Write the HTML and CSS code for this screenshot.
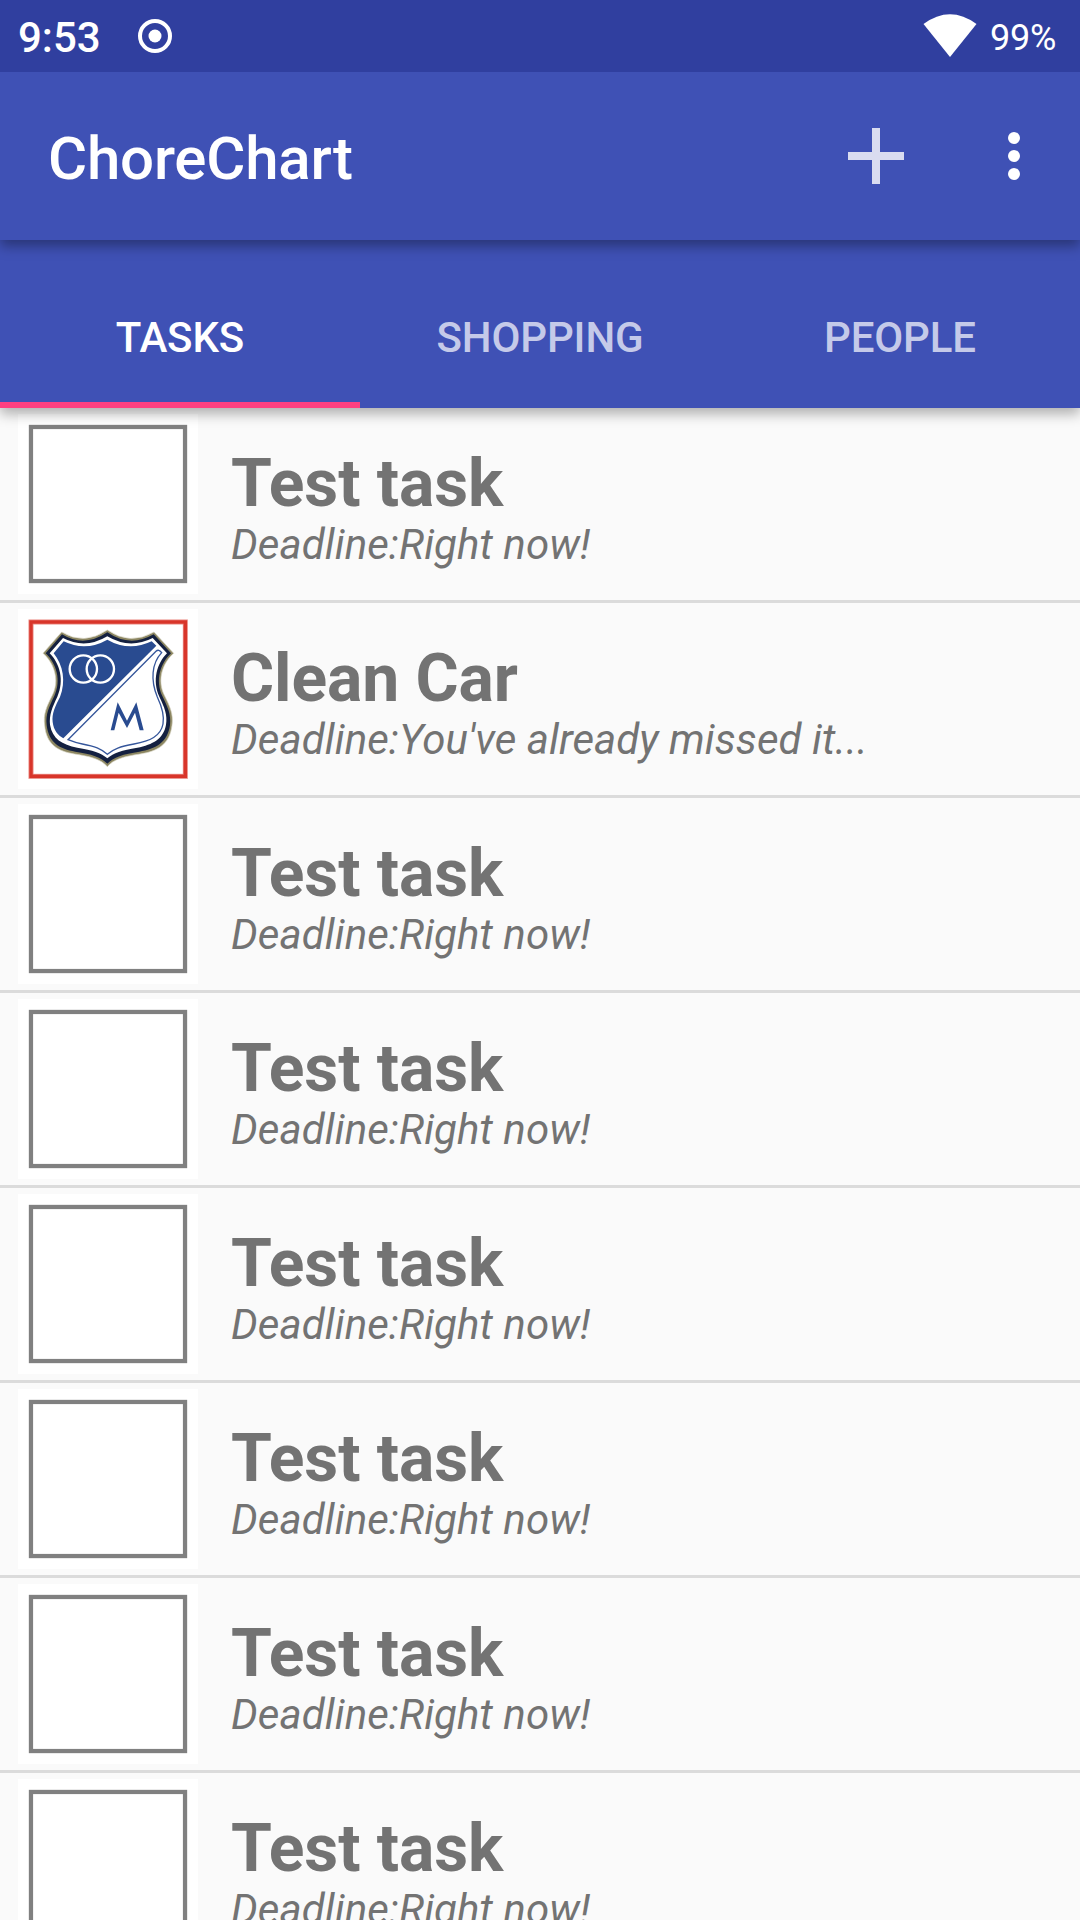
FILE: index.html
```html
<!DOCTYPE html>
<html lang="en">
<head>
<meta charset="utf-8">
<title>ChoreChart</title>
<link rel="stylesheet" href="styles.css">
</head>
<body>
<div class="screen">
  <div class="status-bar">
    <span class="clock">9:53</span>
    <svg class="record-icon" viewBox="0 0 36 36"><circle cx="18" cy="18" r="15" fill="none" stroke="#fff" stroke-width="4"/><circle cx="18" cy="18" r="6.5" fill="#fff"/></svg>
    <svg class="wifi-icon" viewBox="0 0 54 44"><path d="M.5 10Q27-9.500 53.500 10L27 43Z" fill="#fff"/></svg>
    <span class="battery">99%</span>
  </div>
  <header class="app-bar">
    <h1 class="app-title">ChoreChart</h1>
    <svg class="add-icon" viewBox="0 0 56 56"><path d="M24 0h8v24h24v8H32v24h-8V32H0v-8h24z" fill="#d9dcf0"/></svg>
    <svg class="more-icon" viewBox="0 0 12 48"><circle cx="6" cy="6" r="6"/><circle cx="6" cy="24" r="6"/><circle cx="6" cy="42" r="6"/></svg>
  </header>
  <nav class="tabs">
    <span class="tab tab-active">TASKS</span>
    <span class="tab">SHOPPING</span>
    <span class="tab">PEOPLE</span>
  </nav>
  <main class="list">
    <div class="row">
      <div class="thumb"><div class="frame"></div></div>
      <div class="text"><div class="name">Test task</div><div class="deadline">Deadline:Right now!</div></div>
    </div>
    <div class="row">
      <svg class="thumb" viewBox="54 27 540 540">
        <rect x="93" y="66" width="463" height="463" fill="none" stroke="#e9867f" stroke-width="15"/>
        <rect x="93" y="66" width="463" height="463" fill="none" stroke="#d8352a" stroke-width="10"/>
        <path d="M185 96Q252 138 322 90Q390 138 462 96L521 160C488 188 470 240 493 286C509 318 521 342 516 376C509 434 472 454 420 462C372 469 340 478 322 500C304 478 272 469 224 462C174 454 139 434 134 376C129 342 141 318 157 286C180 240 162 188 129 160Z" fill="#8c8661" stroke="#d8d5c4" stroke-width="2"/>
        <path d="M186 103Q252 144 322 97Q390 144 461 103L513 160C481 190 465 241 487 288C502 319 514 343 510 375C503 428 466 447 418 455C370 462 340 471 322 491C304 471 274 462 226 455C179 447 146 428 140 375C136 343 148 319 163 288C185 241 169 190 137 160Z" fill="#142040"/>
        <path d="M189 114Q255 149 322 109Q389 149 458 114L501 160C471 190 456 241 478 290C493 321 503 345 498 374C491 416 458 434 412 443C365 451 341 458 322 475C303 458 279 451 232 443C186 434 157 416 150 374C147 345 157 321 172 290C194 241 179 190 149 160Z" fill="#fff"/>
        <path d="M191 124Q257 156 322 119Q387 156 455 124L469 137L190 415C174 406 161 391 158 366C155 341 165 320 180 291C198 245 190 196 161 160Z" fill="#294b90"/>
        <path d="M204 419L468 154Q476 146 485 158C455 190 451 240 472 291C486 321 494 345 489 372C482 409 450 423 402 432C360 440 341 446 322 463C303 446 285 439 247 432Q226 428 204 419Z" fill="#fff" stroke="#35569b" stroke-width="4"/>
        <g fill="none" stroke="#fff" stroke-width="7"><circle cx="250" cy="207" r="41"/><circle cx="301" cy="207" r="41"/></g>
        <path d="M332 391L353 307L381 362L409 307L431 391H419L405 338L381 384L356 338L343 391Z" fill="#294b90"/>
      </svg>
      <div class="text"><div class="name">Clean Car</div><div class="deadline">Deadline:You've already missed it...</div></div>
    </div>
    <div class="row">
      <div class="thumb"><div class="frame"></div></div>
      <div class="text"><div class="name">Test task</div><div class="deadline">Deadline:Right now!</div></div>
    </div>
    <div class="row">
      <div class="thumb"><div class="frame"></div></div>
      <div class="text"><div class="name">Test task</div><div class="deadline">Deadline:Right now!</div></div>
    </div>
    <div class="row">
      <div class="thumb"><div class="frame"></div></div>
      <div class="text"><div class="name">Test task</div><div class="deadline">Deadline:Right now!</div></div>
    </div>
    <div class="row">
      <div class="thumb"><div class="frame"></div></div>
      <div class="text"><div class="name">Test task</div><div class="deadline">Deadline:Right now!</div></div>
    </div>
    <div class="row">
      <div class="thumb"><div class="frame"></div></div>
      <div class="text"><div class="name">Test task</div><div class="deadline">Deadline:Right now!</div></div>
    </div>
    <div class="row">
      <div class="thumb"><div class="frame"></div></div>
      <div class="text"><div class="name">Test task</div><div class="deadline">Deadline:Right now!</div></div>
    </div>
  </main>
</div>
</body>
</html>
```
FILE: styles.css
```css
* {
  box-sizing: border-box;
}

body {
  margin: 0;
  font-family: Roboto, sans-serif;
  background: #fafafa;
}

.screen {
  display: flex;
  flex-direction: column;
  width: 1080px;
  height: 1920px;
  overflow: hidden;
}

.status-bar {
  display: flex;
  flex: none;
  align-items: flex-start;
  height: 72px;
  padding-left: 18px;
  color: #fff;
  background: #303f9f;
  z-index: 3;
}

.clock {
  width: 119px;
  padding-top: 13px;
  font-size: 42px;
  font-weight: 500;
  line-height: 50px;
}

.record-icon {
  width: 36px;
  height: 36px;
  margin-top: 18px;
}

.wifi-icon {
  width: 54px;
  height: 44px;
  margin: 14px 13px 0 auto;
}

.battery {
  width: 90px;
  padding-top: 17px;
  font-size: 36px;
  line-height: 42px;
  letter-spacing: -.2px;
}

.app-bar {
  display: flex;
  flex: none;
  align-items: center;
  height: 168px;
  padding: 0 60px 0 48px;
  background: #3f51b5;
  box-shadow: 0 6px 12px rgba(0, 0, 0, .35);
  z-index: 2;
}

.app-title {
  flex: 1;
  margin: 0;
  padding-top: 6px;
  color: #fff;
  font-size: 60px;
  font-weight: 500;
  line-height: 70px;
  letter-spacing: -.22px;
}

.add-icon {
  width: 56px;
  height: 56px;
  margin-right: 104px;
}

.more-icon {
  width: 12px;
  height: 48px;
  fill: #fff;
}

.tabs {
  display: grid;
  flex: none;
  grid-template-columns: repeat(3, 1fr);
  height: 168px;
  background: #3f51b5;
  box-shadow: 0 6px 12px rgba(0, 0, 0, .3);
  z-index: 1;
}

.tab {
  padding-top: 73px;
  color: #c5cae9;
  font-size: 42px;
  font-weight: 500;
  line-height: 50px;
  letter-spacing: -.12px;
  text-align: center;
}

.tab-active {
  color: #fff;
  border-bottom: 6px solid #ff4081;
}

.row {
  display: flex;
  height: 195px;
  padding: 6px 18px;
  border-bottom: 3px solid #dbdbdb;
}

.thumb {
  flex: none;
  width: 180px;
  height: 180px;
  padding: 11px;
  background: #fff;
}

svg.thumb {
  padding: 0;
}

.frame {
  width: 158px;
  height: 158px;
  border: 4px solid #808080;
  box-shadow: 0 0 1px #808080, inset 0 0 1px #808080;
}

.text {
  padding: 32px 0 0 33px;
  color: #737373;
  white-space: nowrap;
}

.name {
  font-size: 66px;
  font-weight: 700;
  line-height: 75px;
  letter-spacing: -.1px;
}

.deadline {
  font-size: 42px;
  font-style: italic;
  line-height: 48px;
  letter-spacing: .06px;
}
```
